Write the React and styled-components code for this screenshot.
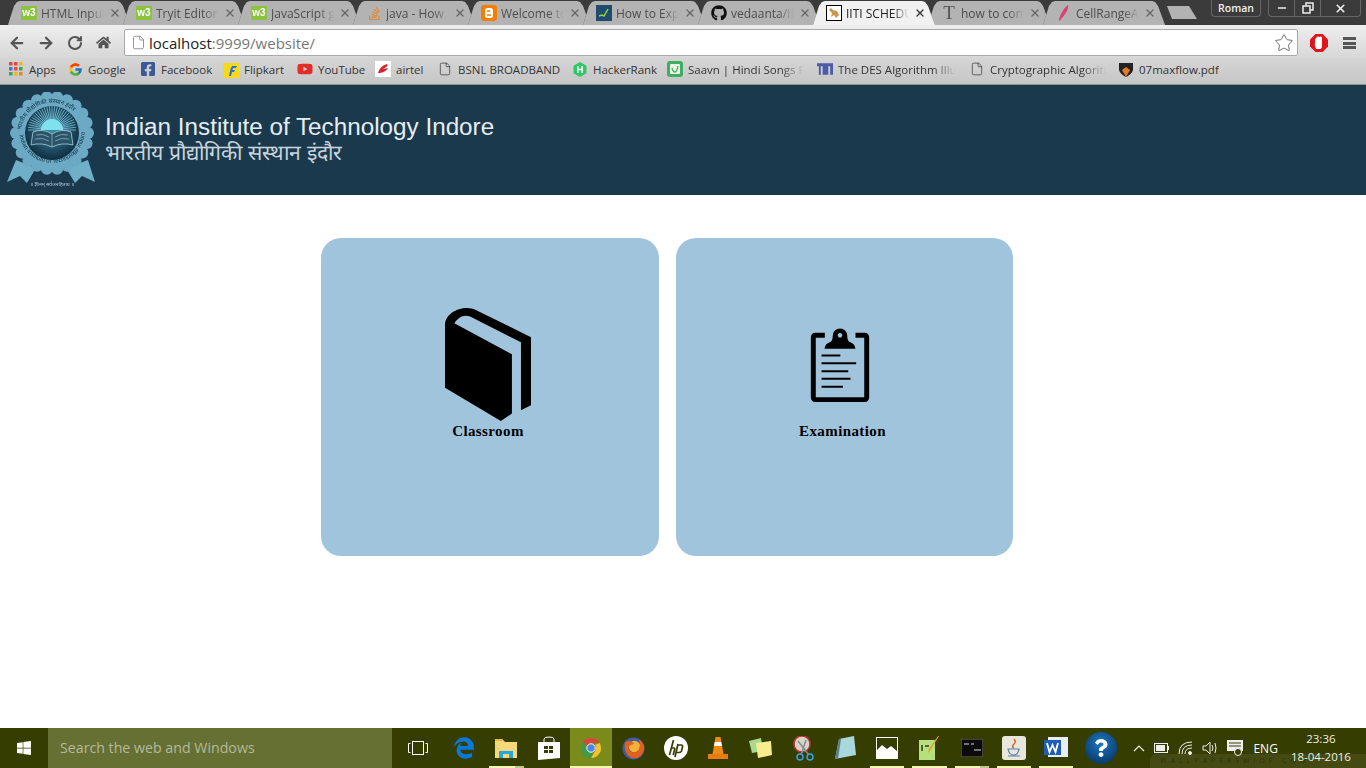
import React from 'react';
import styled, { createGlobalStyle } from 'styled-components';
import { ArrowLeft, ArrowRight, RotateCw, File, Star, X, Minus } from 'lucide-react';
import { FaHome, FaStackOverflow, FaGithub, FaFacebookSquare, FaYoutube, FaWindows, FaQuestion } from 'react-icons/fa';
import { FaEdgeLegacy } from 'react-icons/fa6';
import { FcGoogle } from 'react-icons/fc';

const Global = createGlobalStyle`
    html, body {
        margin: 0;
        height: 100%;
        overflow: hidden;
        background: #fff;
        font-family: "Open Sans", "Noto Sans", sans-serif;
    }
`

const Page = styled.div`
    height: 100vh;
    display: flex;
    flex-direction: column;
`

const TabStrip = styled.div`
    height: 25px;
    background: #3b3b3b;
    display: flex;
    align-items: flex-end;
    padding-left: 8px;
    overflow: hidden;
`

const TabBox = styled.div`
    position: relative;
    flex: none;
    width: 122px;
    height: 24px;
    margin-right: -7px;
    padding-left: 13px;
    box-sizing: border-box;
    display: flex;
    align-items: center;
    gap: 4px;
    z-index: ${props => props.$active ? 2 : 1};
    filter: drop-shadow(0 0 0.6px #555);
    &::before {
        content: "";
        position: absolute;
        inset: 0;
        background: ${props => props.$active ? '#f1f1f1' : '#b3b3b3'};
        clip-path: polygon(0 100%, 6px 5px, 9px 1px, 12px 0, 109px 0, 112px 1px, 115px 5px, 122px 100%);
    }
    > * {
        position: relative;
    }
`

const TabIcon = styled.span`
    width: 16px;
    height: 16px;
    flex: none;
    display: flex;
    align-items: center;
    justify-content: center;
`

const TabLabel = styled.span`
    width: 63px;
    flex: none;
    font-size: 12px;
    white-space: nowrap;
    overflow: hidden;
    color: ${props => props.$active ? '#222' : '#4d4d4d'};
    -webkit-mask-image: linear-gradient(to right, #000 75%, transparent);
    mask-image: linear-gradient(to right, #000 75%, transparent);
`

const TabClose = styled.span`
    display: flex;
    margin-left: 1px;
    color: ${props => props.$active ? '#333' : '#666'};
`

const W3Icon = styled.span`
    width: 16px;
    height: 14px;
    background: #8ac43f;
    color: #fff;
    font: bold 10px/13px "Liberation Sans", sans-serif;
    text-align: center;
    border-radius: 1px;
`

const NewTab = styled.div`
    width: 30px;
    height: 13px;
    margin: 0 0 6px 9px;
    flex: none;
    background: #b3b3b3;
    clip-path: polygon(0 0, 22px 0, 30px 100%, 5px 100%);
`

const Profile = styled.div`
    margin: 0 0 auto auto;
    width: 50px;
    height: 17px;
    border: 1px solid #666;
    border-top: 0;
    border-radius: 0 0 4px 4px;
    color: #f0f0f0;
    font-size: 10.5px;
    font-weight: 600;
    line-height: 17px;
    text-align: center;
    box-sizing: border-box;
`

const WinControls = styled.div`
    display: flex;
    margin: 0 5px auto 7px;
    height: 17px;
    border: 1px solid #666;
    border-top: 0;
    border-radius: 0 0 4px 4px;
    box-sizing: border-box;
`

const WinButton = styled.div`
    width: ${props => props.$w}px;
    display: flex;
    align-items: center;
    justify-content: center;
    color: #eee;
    & + & {
        border-left: 1px solid #666;
    }
`

const Toolbar = styled.div`
    height: 32px;
    flex: none;
    box-sizing: border-box;
    padding: 3px 0 0 2px;
    background: linear-gradient(#eeeeee, #d8d8d8);
    display: flex;
    align-items: center;
    color: #555;
`

const NavButton = styled.div`
    width: 29px;
    display: flex;
    justify-content: center;
    flex: none;
`

const AddressBar = styled.div`
    margin: 0 6px;
    width: 1174px;
    height: 27px;
    box-sizing: border-box;
    background: #fff;
    border: 1px solid #a9a9a9;
    border-radius: 2px;
    display: flex;
    align-items: center;
    padding: 0 3px 0 6px;
    flex: none;
`

const Url = styled.span`
    margin-left: 3px;
    font-size: 15px;
    color: #777;
    flex: 1;
    b {
        font-weight: 400;
        color: #222;
    }
`

const BarMenu = styled.div`
    width: 13px;
    height: 12px;
    margin-left: 10px;
    background: repeating-linear-gradient(#555 0 3px, transparent 3px 4.5px);
`

const Bookmarks = styled.div`
    height: 28px;
    flex: none;
    box-sizing: border-box;
    background: linear-gradient(#d6d6d6, #c6c6c6);
    border-bottom: 1px solid #8f8f8f;
    display: flex;
    align-items: center;
    padding: 0 0 3px 8px;
`

const Mark = styled.div`
    width: ${props => props.$w}px;
    flex: none;
    display: flex;
    align-items: center;
    gap: 5px;
    font-size: 11.5px;
    color: #333;
    white-space: nowrap;
`

const MarkLabel = styled.span`
    overflow: hidden;
    ${props => props.$fade && `
        width: ${props.$fade}px;
        -webkit-mask-image: linear-gradient(to right, #000 80%, transparent);
        mask-image: linear-gradient(to right, #000 80%, transparent);
    `}
`

const MarkIcon = styled.span`
    width: 16px;
    height: 16px;
    flex: none;
    display: flex;
    align-items: center;
    justify-content: center;
`

const Banner = styled.header`
    height: 110px;
    flex: none;
    background: #1b394d;
    display: flex;
    align-items: center;
    padding-left: 6px;
`

const SealSvg = styled.svg`
    flex: none;
    filter: blur(0.35px);
`

const Titles = styled.div`
    margin-left: 9px;
    margin-top: -2px;
    color: #e6edf1;
    font-family: "Liberation Sans", Arial, sans-serif;
    h1 {
        margin: 0;
        font-size: 24.25px;
        font-weight: 400;
        line-height: 27px;
    }
    p {
        margin: 0;
        font-size: 21.2px;
        line-height: 26px;
        color: #c8d4db;
    }
`

const Main = styled.main`
    flex: 1;
    display: flex;
    gap: 17px;
    padding: 43px 0 0 321px;
    align-items: flex-start;
`

const Card = styled.a`
    width: ${props => props.$w}px;
    height: 318px;
    background: #a0c4db;
    border-radius: 20px;
    display: flex;
    flex-direction: column;
    align-items: center;
    justify-content: flex-start;
    color: #000;
    padding: ${props => props.$top}px 4px 0 0;
    box-sizing: border-box;
`

const CardLabel = styled.span`
    font: bold 15px/18px "Liberation Serif", "Times New Roman", serif;
    letter-spacing: 0.4px;
    margin-top: ${props => props.$gap}px;
`

const ClipSvg = styled.svg`
    margin-right: 6px;
`

const Taskbar = styled.footer`
    position: relative;
    height: 40px;
    flex: none;
    background: #363d00;
    display: flex;
    align-items: stretch;
    color: #fff;
`

const StartButton = styled.div`
    width: 48px;
    display: flex;
    align-items: center;
    justify-content: center;
`

const SearchBox = styled.div`
    width: 344px;
    background: #667033;
    color: #b4b99c;
    font-size: 14.2px;
    line-height: 40px;
    padding-left: 12px;
    box-sizing: border-box;
`

const TaskView = styled.div`
    width: 51px;
    display: flex;
    align-items: center;
    justify-content: center;
`

const TaskIcon = styled.div`
    position: relative;
    width: 42.3px;
    flex: none;
    display: flex;
    align-items: center;
    justify-content: center;
    background: ${props => props.$active ? '#7a8a1b' : 'none'};
    ${props => props.$running && `
        &::after {
            content: "";
            position: absolute;
            left: 4px;
            right: 4px;
            bottom: 0;
            height: 2px;
            background: ${props.$running === 'stack'
                ? 'linear-gradient(to right, #f3f6b2 74%, #c3c78c 74%)'
                : '#f3f6b2'};
        }
    `}
    ${props => props.$active && `
        &::after { left: 0; right: 0; }
    `}
`

const HelpBadge = styled.div`
    width: 32px;
    height: 32px;
    margin: 4px 0 0 8px;
    flex: none;
    border-radius: 50%;
    background: radial-gradient(circle at 50% 35%, #1c78c0, #042a55);
    display: flex;
    align-items: center;
    justify-content: center;
`

const Tray = styled.div`
    display: flex;
    align-items: center;
    margin-left: 16px;
    gap: 9px;
    z-index: 1;
`

const Lang = styled.span`
    font-size: 12px;
`

const Clock = styled.div`
    margin-left: 12px;
    width: 62px;
    font-size: 11.5px;
    line-height: 18px;
    padding-top: 2px;
    text-align: center;
    color: #eef0e0;
    white-space: nowrap;
    z-index: 1;
`

const Watermark = styled.div`
    position: absolute;
    right: 0;
    bottom: 0;
    width: 216px;
    height: 14px;
    background: rgba(255, 255, 255, 0.07);
    border-radius: 6px 0 0 0;
    color: rgba(0, 0, 0, 0.35);
    font-size: 7px;
    letter-spacing: 4px;
    line-height: 14px;
    padding-left: 10px;
    box-sizing: border-box;
    overflow: hidden;
    white-space: nowrap;
`

const Seal = () => {
    const bumps = Array.from({ length: 22 }, (_, i) => (i / 22) * Math.PI * 2);
    const rays = Array.from({ length: 29 }, (_, i) => Math.PI + (i / 28) * Math.PI);
    return (
        <SealSvg width="90" height="96" viewBox="0 0 90 96">
            <defs>
                <radialGradient id="sealDisc" cx="50%" cy="45%" r="55%">
                    <stop offset="0" stopColor="#3f8ba6" />
                    <stop offset="1" stopColor="#0f2d40" />
                </radialGradient>
                <path id="sealTop" d="M15 42 a31 31 0 0 1 62 0" />
                <path id="sealBottom" d="M13 38 a33 33 0 0 0 66 0" />
            </defs>
            <path d="M10 68 L1 90 L14 84 L21 91 L30 76Z M82 68 L89 90 L76 84 L69 91 L60 76Z" fill="#6fb0c8" />
            {bumps.map((a, i) => (
                <circle key={i} cx={46 + 36 * Math.cos(a)} cy={41 + 36 * Math.sin(a)} r="6" fill="#6ba9c4" />
            ))}
            <circle cx="46" cy="41" r="37" fill="#6ba9c4" />
            <circle cx="46" cy="41" r="27" fill="url(#sealDisc)" />
            {rays.map((a, i) => (
                <line key={i} x1={46 + 9 * Math.cos(a)} y1={38 + 9 * Math.sin(a)} x2={46 + 24 * Math.cos(a)} y2={38 + 24 * Math.sin(a)} stroke="#7cc4da" strokeWidth="0.8" />
            ))}
            <path d="M35 38 a11 11 0 0 1 22 0Z" fill="#7fe0ee" />
            <path d="M27 40 Q37 36 46 42 Q55 36 65 40 L67 53 Q56 50 46 55 Q36 50 25 53Z" fill="#2a5468" stroke="#a7cfdd" strokeWidth="0.8" />
            <path d="M46 42 V55 M30 43 Q37 41 43 45 M49 45 Q55 41 62 43 M29 47 Q37 45 43 49 M49 49 Q55 45 63 47" stroke="#a7cfdd" strokeWidth="0.6" fill="none" />
            <text fontSize="6" fill="#10303f" fontFamily="Noto Sans, sans-serif">
                <textPath href="#sealTop" startOffset="4">भारतीय प्रौद्योगिकी संस्थान इंदौर</textPath>
            </text>
            <text fontSize="6" fill="#10303f" fontFamily="Liberation Sans, sans-serif">
                <textPath href="#sealBottom" startOffset="5">Indian Institute of Technology Indore</textPath>
            </text>
            <text x="46" y="94" fontSize="5" textAnchor="middle" fill="#a9c4d2" fontFamily="Noto Sans, sans-serif">॥ ज्ञानम् सर्वजनहिताय ॥</text>
        </SealSvg>
    );
};

const Book = () => (
    <svg width="86" height="113" viewBox="75 40 257 337">
        <path d="M75 90 C75 60 110 40 140 40 C150 40 160 42 170 47 L332 127 V330 L302 345 V142 L150 65 C130 57 112 70 103 85 L275 178 V355 L242 377 L75 278 Z" />
    </svg>
);

const Clipboard = () => (
    <ClipSvg width="60" height="76" viewBox="90 35 182 228">
        <path d="M135 59 H107 Q100 59 100 66 V247 Q100 254 107 254 H255 Q262 254 262 247 V66 Q262 59 255 59 H228" fill="none" stroke="#000" strokeWidth="15" />
        <path fillRule="evenodd" d="M134 100 Q136 84 150 80 Q159 77 159 60 A22 22 0 0 1 203 60 Q203 77 212 80 Q226 84 228 100Z M181 52 a7 7 0 1 0 .01 0Z" />
        <path d="M125 120 H182 M125 144 H230 M125 168 H206 M125 191 H213 M125 215 H190" stroke="#000" strokeWidth="6" />
    </ClipSvg>
);

const ChromeLogo = ({ size = 22 }) => (
    <svg width={size} height={size} viewBox="0 0 24 24">
        <path d="M12 1a11 11 0 0 1 9.5 5.5H12a5.500 5.500 0 0 0-5.200 3.700L3.400 5A11 11 0 0 1 12 1Z" fill="#d8453a" />
        <path d="M21.500 6.500A11 11 0 0 1 12 23l4.800-8.300A5.500 5.500 0 0 0 16.500 8.500Z" fill="#f2c230" />
        <path d="M12 23A11 11 0 0 1 3.400 5l4.500 8.700a5.500 5.500 0 0 0 5.800 3.600Z" fill="#3e9c48" />
        <circle cx="12" cy="12" r="4.600" fill="#4a86e8" stroke="#fff" strokeWidth="1" />
    </svg>
);

const Firefox = () => (
    <svg width="23" height="23" viewBox="0 0 24 24">
        <circle cx="12" cy="12" r="11.500" fill="#3a5ea8" />
        <circle cx="13" cy="10" r="6" fill="#f2b23a" />
        <path d="M3 6 Q2 14 6 19 Q12 25 19 20 Q24 15 23 9 Q21 4 17 2 Q20 7 18 11 Q17 16 12 16 Q7 16 7 11 Q8 8 11 8 L13 6 Q10 6 8 4 Q5 4 3 6Z" fill="#e2611f" />
    </svg>
);

const Apps = () => (
    <svg width="14" height="14" viewBox="0 0 14 14">
        {[0, 5, 10].map((y, r) => [0, 5, 10].map((x, c) => (
            <rect key={x + '-' + y} x={x} y={y} width="3.500" height="3.500" fill={[['#e04a3a', '#e04a3a', '#f0b429'], ['#3a7de0', '#e04a3a', '#3aa655'], ['#3aa655', '#f0b429', '#e9862a']][r][c]} />
        )))}
    </svg>
);

const Tomcat = () => (
    <svg width="16" height="16" viewBox="0 0 16 16">
        <rect x="0.500" y="0.500" width="15" height="15" fill="#fff" stroke="#000" />
        <path d="M3 5 L5 3 L7 5 L11 6 L13 10 L10 13 L8 10 L5 12 L6 8Z" fill="#c99a4b" />
    </svg>
);

const Feather = () => (
    <svg width="16" height="16" viewBox="0 0 16 16">
        <path d="M12 0 C13 4 9 10 5 14 L4 16 L3 15 C4 10 7 4 12 0Z" fill="#dd3f72" />
    </svg>
);

const Blogger = () => (
    <svg width="16" height="16" viewBox="0 0 16 16">
        <rect width="16" height="16" rx="3" fill="#f57d00" />
        <rect x="4" y="3" width="8" height="10" rx="2.500" fill="#fff" />
        <path d="M6 6 H9 M6 10 H10" stroke="#f57d00" strokeWidth="1.500" />
    </svg>
);

const ChartTile = () => (
    <svg width="16" height="16" viewBox="0 0 16 16">
        <rect width="16" height="16" fill="#1f4b6e" />
        <path d="M3 11 L6 10 L8 11 L12 4" stroke="#9bd13c" strokeWidth="1.500" fill="none" />
    </svg>
);

const SerifT = styled.span`
    font: 19px/16px "Liberation Serif", serif;
    color: #555;
`

const Flipkart = () => (
    <svg width="16" height="17" viewBox="0 0 16 17">
        <rect y="2" width="16" height="15" fill="#f7d917" />
        <path d="M9 5 H14 L13 7 H10 L9.500 9 H12 L11 11 H9 L8 15 H6 L7.500 8Z" fill="#2a6fd6" />
    </svg>
);

const Airtel = () => (
    <svg width="16" height="16" viewBox="0 0 16 16">
        <rect width="16" height="16" fill="#fff" />
        <path d="M3 12 Q5 5 12 3 Q14 5 8 8 L13 7 Q11 11 5 12Z" fill="#d8232a" />
    </svg>
);

const HackerRank = () => (
    <svg width="14" height="15" viewBox="0 0 14 15">
        <path d="M7 0 L13.500 3.700 V11.300 L7 15 L.5 11.300 V3.700Z" fill="#2ec866" />
        <path d="M4.800 4 V11 M9.200 4 V11 M4.800 7.500 H9.200" stroke="#fff" strokeWidth="1.500" />
    </svg>
);

const Saavn = () => (
    <svg width="16" height="16" viewBox="0 0 16 16">
        <rect width="16" height="16" rx="3" fill="#3fae5e" />
        <rect x="3" y="3" width="10" height="10" rx="1" fill="#e8f5e6" />
        <path d="M5 7 Q6 11 8 11 Q10 11 11 5" stroke="#3fae5e" strokeWidth="1.300" fill="none" />
    </svg>
);

const TumLogo = () => (
    <svg width="17" height="12" viewBox="0 0 17 12">
        <path d="M0 0 H17 V12 H14 V3 H12 V12 H6 V3 H4 V12 H2 V3 H0Z" fill="#4a5ba8" />
    </svg>
);

const Shield = () => (
    <svg width="14" height="15" viewBox="0 0 14 15">
        <path d="M0 1 H14 V8 Q13 12 7 15 Q1 12 0 8Z" fill="#222" />
        <path d="M3 8 L7 5 L11 8 L7 15Z" fill="#e87722" />
    </svg>
);

const AdBlock = () => (
    <svg width="18" height="18" viewBox="0 0 18 18">
        <path d="M5.500 0 H12.500 L18 5.500 V12.500 L12.500 18 H5.500 L0 12.500 V5.500Z" fill="#e0141c" />
        <path d="M6 15 Q4 11 5 8 V6 Q5 4 6.500 4 V3 Q8 2 9.500 3 Q11 2 12 3.500 V11 Q12 15 10 15Z" fill="#fff" />
    </svg>
);

const Explorer = () => (
    <svg width="22" height="20" viewBox="0 0 22 20">
        <path d="M0 2 H8 L10 4 H22 V20 H0Z" fill="#f6d77a" />
        <rect y="1" width="8" height="2" fill="#e6b84c" />
        <path d="M4 13 H18 V20 H14 V16 H8 V20 H4Z" fill="#22a7e0" />
    </svg>
);

const StoreBag = () => (
    <svg width="22" height="24" viewBox="0 0 22 24">
        <path d="M0 6 H22 V22 L0 24Z" fill="#fff" />
        <path d="M6 6 V3 Q6 1 11 1 Q16 1 16 3 V6" fill="none" stroke="#fff" />
        <path d="M6 10 H10 V13 H6Z M11 10 H15 V13 H11Z M6 14 H10 V17 H6Z M11 14 H15 V17 H11Z" fill="#363d00" />
    </svg>
);

const HpLogo = () => (
    <svg width="24" height="24" viewBox="0 0 24 24">
        <circle cx="12" cy="12" r="12" fill="#fff" />
        <path d="M9.500 4 L5.500 19 M6.800 12 H10 Q11 12 10.600 13.500 L9.200 19 M14 8 L11 21 M14 9 H17 Q19 9 18.500 11 L17.500 15 Q17 16.500 15 16.500 H12.500" stroke="#363d00" strokeWidth="1.700" fill="none" />
    </svg>
);

const Cone = () => (
    <svg width="20" height="24" viewBox="0 0 20 24">
        <path d="M7.500 1 H12.500 L15.500 18 H4.500Z" fill="#f08a12" />
        <path d="M6.800 6 H13.200 L14 10 H6Z" fill="#fff" />
        <path d="M0 18 H20 V23 H0Z" fill="#e87c0c" />
    </svg>
);

const Sticky = () => (
    <svg width="24" height="22" viewBox="0 0 24 22">
        <path d="M1 4 L13 1 L15 14 L4 16Z" fill="#a9d88e" />
        <path d="M8 6 L23 4 L24 18 L10 21Z" fill="#f9ec8c" />
    </svg>
);

const Snipping = () => (
    <svg width="22" height="25" viewBox="0 0 22 25">
        <circle cx="10" cy="8" r="8" fill="#d9d3c8" stroke="#c0353a" strokeWidth="1.500" />
        <path d="M6 5 L17 19 M14 4 L9 19" stroke="#7f8c96" strokeWidth="1.500" />
        <circle cx="8" cy="21" r="3" fill="none" stroke="#3aa0e0" strokeWidth="1.500" />
        <circle cx="18" cy="21" r="3" fill="none" stroke="#3aa0e0" strokeWidth="1.500" />
    </svg>
);

const NotePad = () => (
    <svg width="22" height="24" viewBox="0 0 22 24">
        <path d="M5 3 L20 0 L22 19 L1 23Z" fill="#a8d8dc" />
        <path d="M5 3 L1 23 L4 23 L7 3Z" fill="#5d7f86" />
    </svg>
);

const Photos = () => (
    <svg width="22" height="22" viewBox="0 0 22 22">
        <rect x="0.500" y="0.500" width="21" height="21" fill="#363d00" stroke="#fff" />
        <path d="M0 22 V14 L6 8 L11 12 L15 9 L22 15 V22Z" fill="#fff" />
    </svg>
);

const NotepadPP = () => (
    <svg width="22" height="24" viewBox="0 0 22 24">
        <path d="M1 4 H17 V24 H1Z" fill="#b6e07a" />
        <path d="M4 9 V15 M7 10 H11" stroke="#333" strokeWidth="1.500" />
        <path d="M21 0 L12 15 L10 17 L11 13 L20 0Z" fill="#e8a020" />
    </svg>
);

const Cmd = () => (
    <svg width="22" height="18" viewBox="0 0 22 18">
        <rect width="22" height="18" fill="#0b0b0b" stroke="#777" />
        <path d="M3 5 H8 M10 5 H13 M13 11 H20" stroke="#ddd" strokeWidth="1" />
    </svg>
);

const JavaTile = () => (
    <svg width="24" height="24" viewBox="0 0 24 24">
        <rect width="24" height="24" rx="3" fill="#e9e6dc" />
        <path d="M12 3 Q15 6 11 9 Q10 11 12 12" stroke="#d8632a" strokeWidth="1.500" fill="none" />
        <path d="M6 13 H17 Q16 19 12 19 Q7 19 6 13Z M6 20 H18" stroke="#5a7fa8" strokeWidth="1.200" fill="none" />
    </svg>
);

const WordTile = () => (
    <svg width="24" height="23" viewBox="0 0 24 23">
        <rect x="4" width="20" height="20" fill="#e8eef7" />
        <path d="M0 3 H17 V18 H0Z" fill="#1f5eb5" />
        <path d="M3 6 L5.500 15 L8.500 8 L11.500 15 L14 6" stroke="#fff" strokeWidth="1.800" fill="none" />
    </svg>
);

const Wifi = () => (
    <svg width="15" height="14" viewBox="0 0 15 14" fill="none" stroke="#eee">
        <path d="M1 13 Q1 1 14 1 M4 13 Q4 4 14 4 M7 13 Q7 7 14 7" />
        <circle cx="12" cy="12" r="1.500" fill="#eee" />
    </svg>
);

const Speaker = () => (
    <svg width="16" height="14" viewBox="0 0 16 14" fill="none" stroke="#eee">
        <path d="M1 5 H4 L8 1 V13 L4 9 H1Z M10 4 Q12 7 10 10 M13 2 Q15 7 13 12" />
    </svg>
);

const Battery = () => (
    <svg width="15" height="10" viewBox="0 0 15 10">
        <rect x="0.500" y="0.500" width="13" height="9" fill="none" stroke="#eee" />
        <rect x="2" y="2" width="9" height="6" fill="#eee" />
        <rect x="14" y="3" width="1" height="4" fill="#eee" />
    </svg>
);

const Action = () => (
    <svg width="17" height="17" viewBox="0 0 17 17">
        <path d="M0 0 H16 V11 H0Z" fill="#eee" />
        <path d="M2 3 H14 M2 6 H14" stroke="#363d00" />
        <circle cx="11" cy="12" r="3.500" fill="#363d00" stroke="#eee" />
    </svg>
);

const Chevron = () => (
    <svg width="12" height="7" viewBox="0 0 12 7" fill="none" stroke="#eee" strokeWidth="1.200">
        <path d="M1 6 L6 1 L11 6" />
    </svg>
);

const TaskViewIcon = () => (
    <svg width="20" height="14" viewBox="0 0 20 14" fill="none" stroke="#fff">
        <rect x="4.500" y="0.500" width="11" height="13" />
        <path d="M2.500 2.500 H.5 V11.500 H2.500 M17.500 2.500 H19.500 V11.500 H17.500" />
    </svg>
);

const RestoreIcon = () => (
    <svg width="12" height="12" viewBox="0 0 12 12" fill="none" stroke="currentColor" strokeWidth="1.500">
        <rect x="1" y="4" width="7" height="7" />
        <path d="M4 4 V1 H11 V8 H8" />
    </svg>
);

const tabs = [
    { icon: <W3Icon>w3</W3Icon>, label: 'HTML Input' },
    { icon: <W3Icon>w3</W3Icon>, label: 'Tryit Editor' },
    { icon: <W3Icon>w3</W3Icon>, label: 'JavaScript get' },
    { icon: <FaStackOverflow size={15} color="#e08a3a" />, label: 'java - How to' },
    { icon: <Blogger />, label: 'Welcome to' },
    { icon: <ChartTile />, label: 'How to Export' },
    { icon: <FaGithub size={16} color="#111" />, label: 'vedaanta/IIT' },
    { icon: <Tomcat />, label: 'IITI SCHEDULE', active: true },
    { icon: <SerifT>T</SerifT>, label: 'how to conv' },
    { icon: <Feather />, label: 'CellRangeAdd' },
];

const marks = [
    { w: 59, icon: <Apps />, label: 'Apps' },
    { w: 73, icon: <FcGoogle size={15} />, label: 'Google' },
    { w: 83, icon: <FaFacebookSquare size={16} color="#3b5998" />, label: 'Facebook' },
    { w: 74, icon: <Flipkart />, label: 'Flipkart' },
    { w: 78, icon: <FaYoutube size={16} color="#e52d27" />, label: 'YouTube' },
    { w: 62, icon: <Airtel />, label: 'airtel' },
    { w: 135, icon: <File size={14} strokeWidth={1.2} />, label: 'BSNL BROADBAND' },
    { w: 95, icon: <HackerRank />, label: 'HackerRank' },
    { w: 150, icon: <Saavn />, label: 'Saavn | Hindi Songs Free', fade: 116 },
    { w: 152, icon: <TumLogo />, label: 'The DES Algorithm Illustrated', fade: 118 },
    { w: 149, icon: <File size={14} strokeWidth={1.2} />, label: 'Cryptographic Algorithms', fade: 116 },
    { w: 110, icon: <Shield />, label: '07maxflow.pdf' },
];

const apps = [
    { icon: <FaEdgeLegacy size={22} color="#0a78d7" /> },
    { icon: <Explorer />, running: 'stack' },
    { icon: <StoreBag /> },
    { icon: <ChromeLogo />, active: true, running: 'on' },
    { icon: <Firefox /> },
    { icon: <HpLogo /> },
    { icon: <Cone /> },
    { icon: <Sticky /> },
    { icon: <Snipping /> },
    { icon: <NotePad /> },
    { icon: <Photos />, running: 'on' },
    { icon: <NotepadPP />, running: 'on' },
    { icon: <Cmd />, running: 'stack' },
    { icon: <JavaTile />, running: 'on' },
    { icon: <WordTile />, running: 'on' },
];

export default function App() {
    return (
        <Page>
            <Global />

            <TabStrip>
                {tabs.map(t => (
                    <TabBox key={t.label} $active={t.active}>
                        <TabIcon>{t.icon}</TabIcon>
                        <TabLabel $active={t.active}>{t.label}</TabLabel>
                        <TabClose $active={t.active}><X size={12} strokeWidth={2.5} /></TabClose>
                    </TabBox>
                ))}
                <NewTab />
                <Profile>Roman</Profile>
                <WinControls>
                    <WinButton $w={25}><Minus size={12} strokeWidth={3} /></WinButton>
                    <WinButton $w={25}><RestoreIcon /></WinButton>
                    <WinButton $w={39}><X size={13} strokeWidth={3} /></WinButton>
                </WinControls>
            </TabStrip>

            <Toolbar>
                <NavButton><ArrowLeft size={18} strokeWidth={3} /></NavButton>
                <NavButton><ArrowRight size={18} strokeWidth={3} /></NavButton>
                <NavButton><RotateCw size={16} strokeWidth={3} /></NavButton>
                <NavButton><FaHome size={15} /></NavButton>
                <AddressBar>
                    <File size={15} strokeWidth={1.2} color="#777" />
                    <Url><b>localhost</b>:9999/website/</Url>
                    <Star size={20} strokeWidth={1} color="#555" />
                </AddressBar>
                <NavButton><AdBlock /></NavButton>
                <BarMenu />
            </Toolbar>

            <Bookmarks>
                {marks.map(m => (
                    <Mark key={m.label} $w={m.w}>
                        <MarkIcon>{m.icon}</MarkIcon>
                        <MarkLabel $fade={m.fade}>{m.label}</MarkLabel>
                    </Mark>
                ))}
            </Bookmarks>

            <Banner>
                <Seal />
                <Titles>
                    <h1>Indian Institute of Technology Indore</h1>
                    <p>भारतीय प्रौद्योगिकी संस्थान इंदौर</p>
                </Titles>
            </Banner>

            <Main>
                <Card $w={338} $top={70}>
                    <Book />
                    <CardLabel $gap={1}>Classroom</CardLabel>
                </Card>
                <Card $w={337} $top={89}>
                    <Clipboard />
                    <CardLabel $gap={19}>Examination</CardLabel>
                </Card>
            </Main>

            <Taskbar>
                <StartButton><FaWindows size={16} /></StartButton>
                <SearchBox>Search the web and Windows</SearchBox>
                <TaskView><TaskViewIcon /></TaskView>
                {apps.map((a, i) => (
                    <TaskIcon key={i} $active={a.active} $running={a.running}>{a.icon}</TaskIcon>
                ))}
                <HelpBadge><FaQuestion size={18} /></HelpBadge>
                <Tray>
                    <Chevron />
                    <Battery />
                    <Wifi />
                    <Speaker />
                    <Action />
                    <Lang>ENG</Lang>
                </Tray>
                <Clock>23:36<br />18-04-2016</Clock>
                <Watermark>WALLPAPERSWIDE.COM</Watermark>
            </Taskbar>
        </Page>
    );
}
